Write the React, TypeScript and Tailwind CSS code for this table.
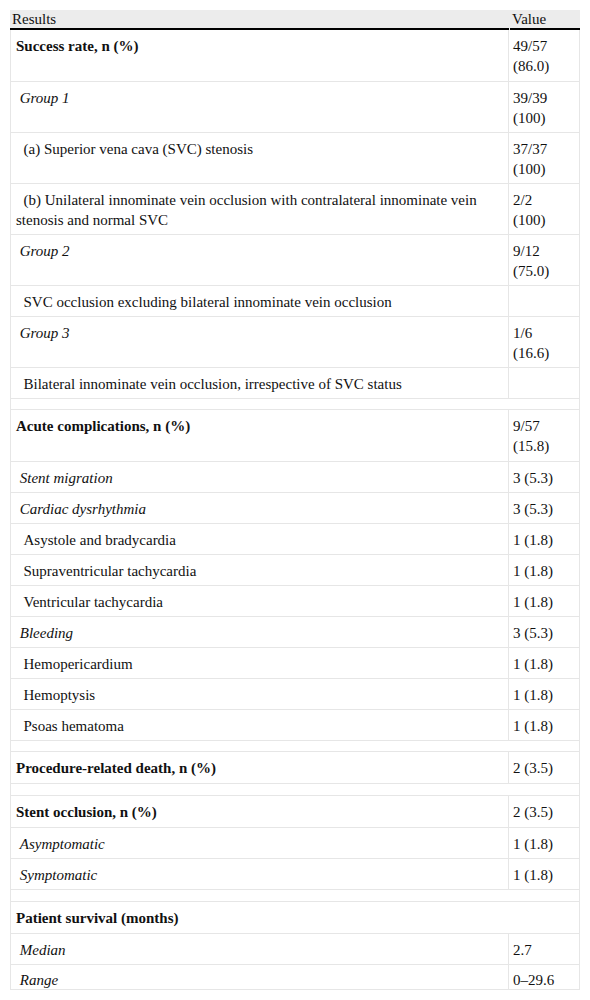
import React from 'react';

type Row =
  | { kind: 'spacer'; tall?: boolean }
  | { kind: 'row'; label: string; value?: string; bold?: boolean; italic?: boolean; indent?: number; span?: boolean; last?: boolean };

const rows: Row[] = [
  { kind: 'row', label: 'Success rate, n (%)', value: '49/57 (86.0)', bold: true },
  { kind: 'row', label: 'Group 1', value: '39/39 (100)', italic: true, indent: 1 },
  { kind: 'row', label: '(a) Superior vena cava (SVC) stenosis', value: '37/37 (100)', indent: 2 },
  {
    kind: 'row',
    label: '(b) Unilateral innominate vein occlusion with contralateral innominate vein stenosis and normal SVC',
    value: '2/2 (100)',
    indent: 2,
  },
  { kind: 'row', label: 'Group 2', value: '9/12 (75.0)', italic: true, indent: 1 },
  { kind: 'row', label: 'SVC occlusion excluding bilateral innominate vein occlusion', value: '', indent: 2 },
  { kind: 'row', label: 'Group 3', value: '1/6 (16.6)', italic: true, indent: 1 },
  { kind: 'row', label: 'Bilateral innominate vein occlusion, irrespective of SVC status', value: '', indent: 2 },
  { kind: 'spacer' },
  { kind: 'row', label: 'Acute complications, n (%)', value: '9/57 (15.8)', bold: true },
  { kind: 'row', label: 'Stent migration', value: '3 (5.3)', italic: true, indent: 1 },
  { kind: 'row', label: 'Cardiac dysrhythmia', value: '3 (5.3)', italic: true, indent: 1 },
  { kind: 'row', label: 'Asystole and bradycardia', value: '1 (1.8)', indent: 2 },
  { kind: 'row', label: 'Supraventricular tachycardia', value: '1 (1.8)', indent: 2 },
  { kind: 'row', label: 'Ventricular tachycardia', value: '1 (1.8)', indent: 2 },
  { kind: 'row', label: 'Bleeding', value: '3 (5.3)', italic: true, indent: 1 },
  { kind: 'row', label: 'Hemopericardium', value: '1 (1.8)', indent: 2 },
  { kind: 'row', label: 'Hemoptysis', value: '1 (1.8)', indent: 2 },
  { kind: 'row', label: 'Psoas hematoma', value: '1 (1.8)', indent: 2 },
  { kind: 'spacer' },
  { kind: 'row', label: 'Procedure-related death, n (%)', value: '2 (3.5)', bold: true },
  { kind: 'spacer', tall: true },
  { kind: 'row', label: 'Stent occlusion, n (%)', value: '2 (3.5)', bold: true },
  { kind: 'row', label: 'Asymptomatic', value: '1 (1.8)', italic: true, indent: 1 },
  { kind: 'row', label: 'Symptomatic', value: '1 (1.8)', italic: true, indent: 1 },
  { kind: 'spacer', tall: true },
  { kind: 'row', label: 'Patient survival (months)', bold: true, span: true },
  { kind: 'row', label: 'Median', value: '2.7', italic: true, indent: 1 },
  { kind: 'row', label: 'Range', value: '0–29.6', italic: true, indent: 1, last: true },
];

function splitValue(v: string) {
  // "49/57 (86.0)" wraps onto two lines in the narrow column
  const m = v.match(/^(\d+\/\d+) (\(.*\))$/);
  if (!m) return [v];
  return [m[1], m[2]];
}

export default function App() {
  return (
    <div className="bg-white min-h-[1000px] pt-[10px] pl-[10px] text-[#111]" style={{ fontFamily: '"Liberation Serif", "Times New Roman", serif' }}>
      <div className="w-[570px] text-[15px] leading-[20px]">
        {/* Header */}
        <div className="flex bg-[#ececec] text-[15px] leading-[18px]">
          <div className="w-[499px] pl-[2px] border-b-2 border-black mr-[1px]">Results</div>
          <div className="flex-1 pl-[2px] border-b-2 border-black">Value</div>
        </div>

        <div className="border-x border-[#e6e6e6]">
          {rows.map((r, i) => {
            if (r.kind === 'spacer') {
              return <div key={i} className={`${r.tall ? 'h-[12px]' : 'h-[11px]'} border-b border-[#e6e6e6]`} />;
            }
            const pad = r.last
              ? 'pt-[5px] pb-0'
              : r.bold
              ? 'pt-[6px] pb-[5px]'
              : 'pt-[6px] pb-[4px]';
            const indent = '\u00a0'.repeat(r.indent ?? 0);
            return (
              <div key={i} className={`flex ${r.last ? 'h-[25px] overflow-hidden' : ''} border-b border-[#e6e6e6]`}>
                <div
                  className={`${r.span ? 'flex-1' : 'w-[498px] border-r border-[#e6e6e6]'} px-[5px] ${pad} ${
                    r.bold ? 'font-bold' : ''
                  } ${r.italic ? 'italic' : ''}`}
                >
                  {indent}
                  {r.label}
                </div>
                {!r.span && (
                  <div className={`flex-1 px-[4px] ${pad}`}>
                    {splitValue(r.value ?? '').map((line, j) => (
                      <div key={j}>{line}</div>
                    ))}
                  </div>
                )}
              </div>
            );
          })}
        </div>
      </div>
    </div>
  );
}
